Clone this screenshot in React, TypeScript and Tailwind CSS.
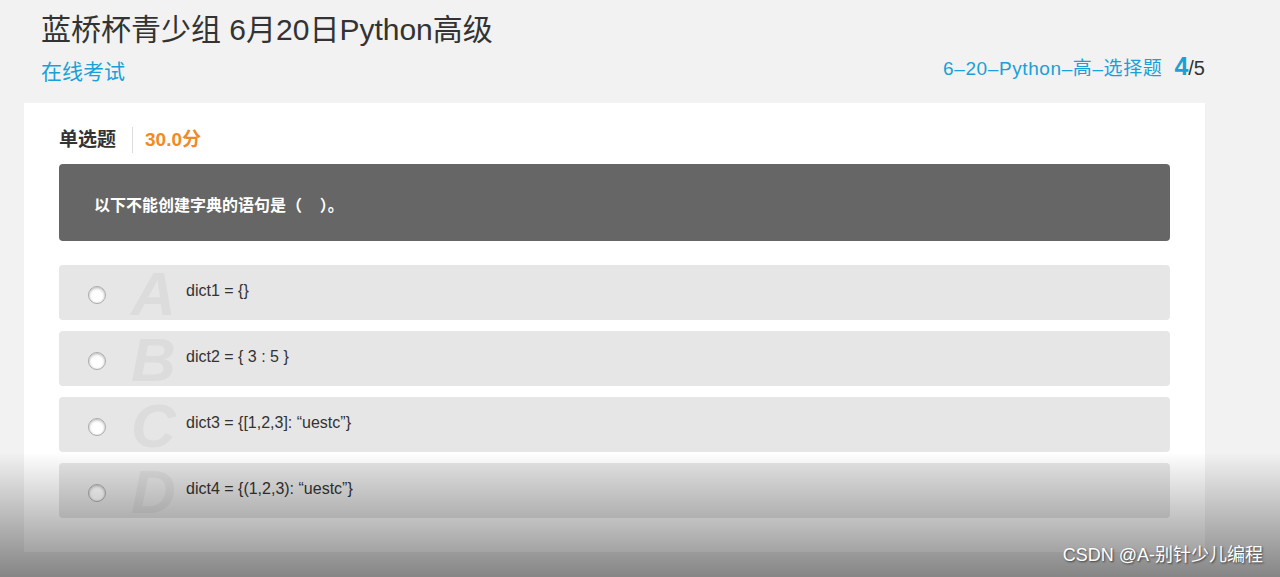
const sans = "font-['Liberation_Sans','Noto_Sans_CJK_SC',sans-serif]";

const options = [
  { key: "A", text: "dict1 = {}" },
  { key: "B", text: "dict2 = { 3 : 5 }" },
  { key: "C", text: "dict3 = {[1,2,3]: “uestc”}" },
  { key: "D", text: "dict4 = {(1,2,3): “uestc”}" },
];

function Radio() {
  return (
    <span className="w-[18px] h-[18px] shrink-0 mt-[4px] rounded-full bg-white border border-[#aaa] shadow-[inset_0_1px_3px_rgba(0,0,0,0.3)]" />
  );
}

function OptionRow({ letter, text }: { letter: string; text: string }) {
  return (
    <div className="h-[55px] rounded-[4px] bg-[#e6e6e6] flex items-center pl-[29px]">
      <Radio />
      <span className="w-[80px] h-[55px] pl-[25px] text-[62px] leading-[58px] font-bold italic text-[#dcdcdc] select-none">
        {letter}
      </span>
      <span className="text-[16px] text-[#333] -mt-1">{text}</span>
    </div>
  );
}

export default function App() {
  return (
    <div className={`relative h-[577px] overflow-hidden bg-[#f2f2f2] ${sans}`}>
      <div className="w-[1181px] ml-[24px]">
        <header className="pl-[17px] pt-[10px] h-[103px]">
          <h1 className="text-[30px] leading-[40px] text-[#333]">蓝桥杯青少组 6月20日Python高级</h1>
          <div className="-mt-[2px] flex items-end justify-between">
            <span className="text-[21px] leading-[28px] text-[#1aa0d8]">在线考试</span>
            <div className="flex items-baseline gap-[12px]">
              <span className="text-[19px] tracking-[0.6px] text-[#1aa0d8]">6–20–Python–高–选择题</span>
              <span className="text-[#333]">
                <span className="text-[25px] font-bold text-[#1aa0d8]">4</span>
                <span className="text-[20px]">/5</span>
              </span>
            </div>
          </div>
        </header>

        <main className="bg-white h-[449px] px-[35px] pt-[22px]">
          <div className="flex items-center h-[30px]">
            <span className="text-[19px] font-bold text-[#333] pr-[16px] border-r border-[#ddd] leading-[26px]">单选题</span>
            <span className="text-[19px] font-bold text-[#f08a24] pl-[12px]">30.0分</span>
          </div>

          <div className="mt-[9px] h-[77px] rounded-[4px] bg-[#666] flex items-center pl-[35px]">
            <span className="text-[16px] font-bold text-white mt-[6px]">以下不能创建字典的语句是（&nbsp;&nbsp;&nbsp;&nbsp;）。</span>
          </div>

          <div className="mt-[24px] flex flex-col gap-[11px]">
            {options.map((o) => (
              <OptionRow key={o.key} letter={o.key} text={o.text} />
            ))}
          </div>
        </main>
      </div>

      {/* video overlay shade at the bottom */}
      <div className="absolute left-0 right-0 bottom-0 h-[125px] bg-gradient-to-b from-transparent to-black/45 pointer-events-none" />

      <span className="absolute right-[17px] bottom-[8px] text-[18px] text-white [text-shadow:1px_1px_2px_rgba(0,0,0,0.6)]">
        CSDN @A-别针少儿编程
      </span>
    </div>
  );
}
